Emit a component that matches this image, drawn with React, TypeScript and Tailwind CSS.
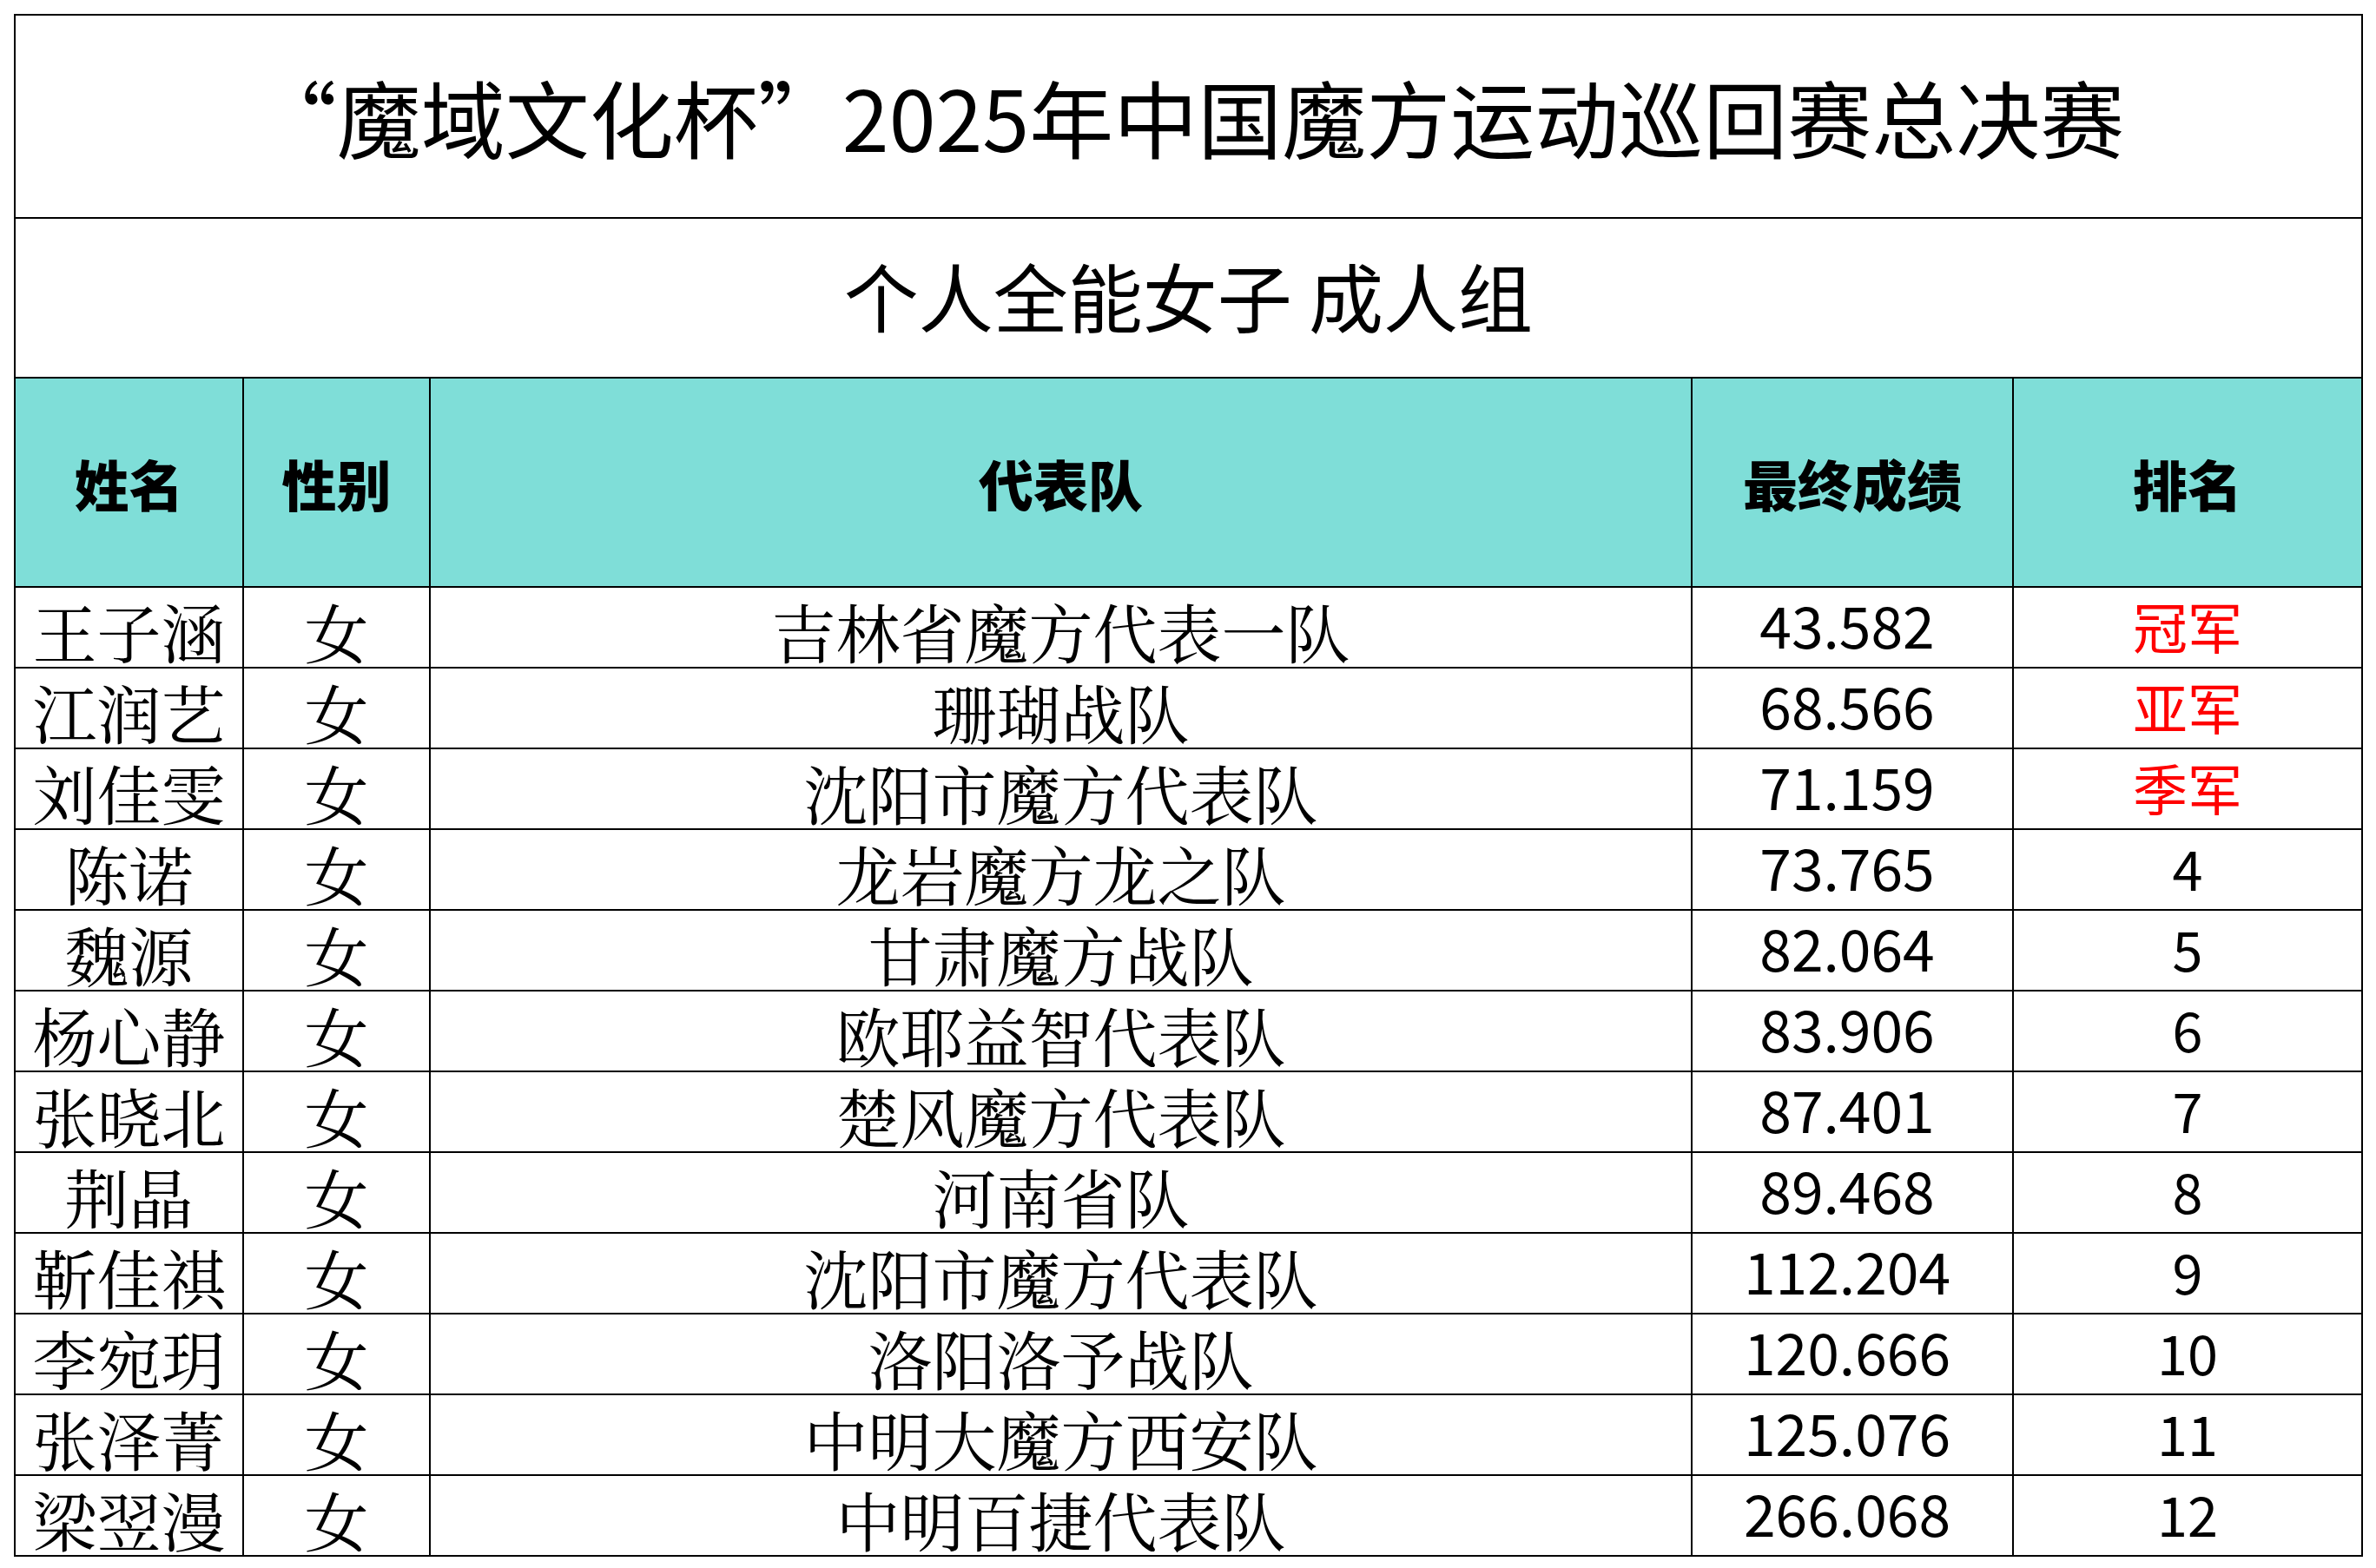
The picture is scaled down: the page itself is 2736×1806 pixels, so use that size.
const rows = [
  { name: "王子涵", team: "吉林省魔方代表一队", score: "43.582", rank: "冠军" },
  { name: "江润艺", team: "珊瑚战队", score: "68.566", rank: "亚军" },
  { name: "刘佳雯", team: "沈阳市魔方代表队", score: "71.159", rank: "季军" },
  { name: "陈诺", team: "龙岩魔方龙之队", score: "73.765", rank: "4" },
  { name: "魏源", team: "甘肃魔方战队", score: "82.064", rank: "5" },
  { name: "杨心静", team: "欧耶益智代表队", score: "83.906", rank: "6" },
  { name: "张晓北", team: "楚风魔方代表队", score: "87.401", rank: "7" },
  { name: "荆晶", team: "河南省队", score: "89.468", rank: "8" },
  { name: "靳佳祺", team: "沈阳市魔方代表队", score: "112.204", rank: "9" },
  { name: "李宛玥", team: "洛阳洛予战队", score: "120.666", rank: "10" },
  { name: "张泽菁", team: "中明大魔方西安队", score: "125.076", rank: "11" },
  { name: "梁翌漫", team: "中明百捷代表队", score: "266.068", rank: "12" },
];

const sans = "font-['Noto_Sans_CJK_SC','Noto_Sans',sans-serif]";
const serif = "font-['Noto_Serif_CJK_SC','Noto_Sans_CJK_SC',serif]";

// top three get a red title instead of a number
const isMedal = (rank: string) => isNaN(Number(rank));

export default function App() {
  return (
    <div className="min-h-screen bg-white pl-[16px] pt-[16px]">
      <table className="table-fixed border-collapse border-2 border-black text-black">
        <colgroup>
          <col className="w-[263px]" />
          <col className="w-[215px]" />
          <col className="w-[1453px]" />
          <col className="w-[370px]" />
          <col className="w-[402px]" />
        </colgroup>
        <tbody>
          <tr className="h-[234px]">
            <td colSpan={5} className={`border-2 border-black text-center text-[97px] leading-none pb-[4px] ${sans}`}>
              “魔域文化杯”2025年中国魔方运动巡回赛总决赛
            </td>
          </tr>
          <tr className="h-[184px]">
            <td colSpan={5} className={`border-2 border-black text-center text-[86px] leading-none pb-[6px] ${sans}`}>
              个人全能女子 成人组
            </td>
          </tr>
          <tr className={`h-[241px] bg-[#7fded8] text-[63px] font-black leading-none ${sans}`}>
            <td className="border-2 border-black text-center">姓名</td>
            <td className="border-2 border-black text-center">性别</td>
            <td className="border-2 border-black text-center">代表队</td>
            <td className="border-2 border-black text-center">最终成绩</td>
            <td className="border-2 border-black text-center">排名</td>
          </tr>
          {rows.map((r) => (
            <tr key={r.name} className="h-[93px]">
              <td className={`border-2 border-black text-center text-[74px] leading-none pt-[6px] ${serif}`}>{r.name}</td>
              <td className={`border-2 border-black text-center text-[74px] leading-none pt-[6px] ${serif}`}>女</td>
              <td className={`border-2 border-black text-center text-[74px] leading-none pt-[6px] ${serif}`}>{r.team}</td>
              <td className={`border-2 border-black text-center text-[66px] leading-none pb-[10px] ${sans}`}>
                <span className="pr-[12px]">{r.score}</span>
              </td>
              <td
                className={`border-2 border-black text-center text-[63px] leading-none pb-[6px] ${sans} ${
                  isMedal(r.rank) ? "text-[#ff0000]" : ""
                }`}
              >
                {r.rank}
              </td>
            </tr>
          ))}
        </tbody>
      </table>
    </div>
  );
}
